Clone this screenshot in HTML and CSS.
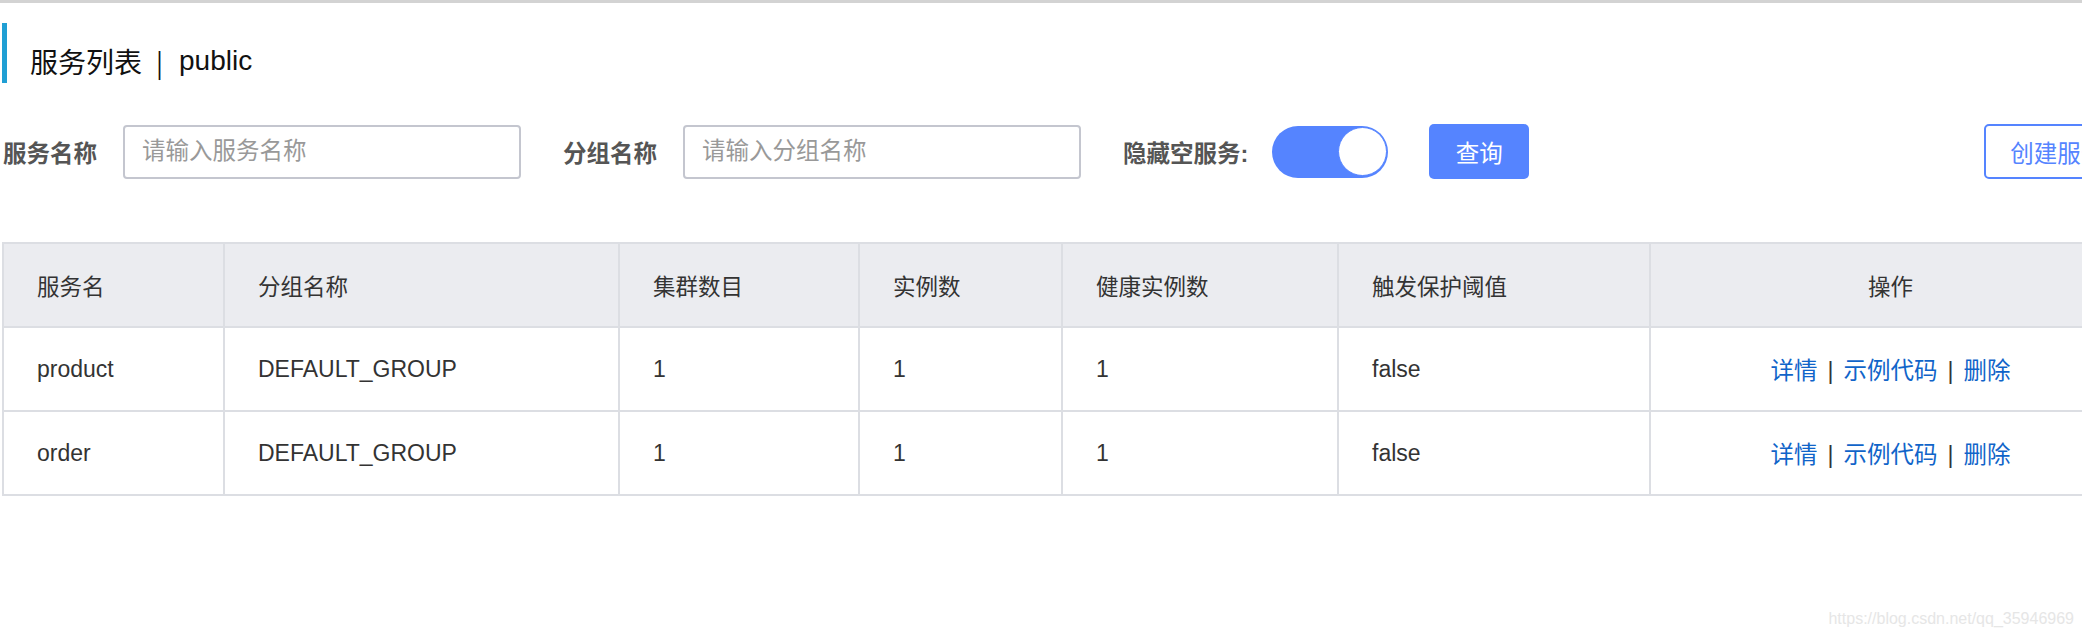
FILE: index.html
```html
<!DOCTYPE html>
<html lang="zh-CN">
<head>
<meta charset="utf-8">
<title>服务列表</title>
<link rel="stylesheet" href="styles.css">
</head>
<body>
<div class="page">
  <h3 class="page-title">
    <span class="title-item">服务列表</span>
    <span class="title-sep">|</span>
    <span class="title-item">public</span>
  </h3>

  <div class="filter-bar">
    <label class="filter-label">服务名称</label>
    <input class="text-input" type="text" placeholder="请输入服务名称">
    <label class="filter-label second">分组名称</label>
    <input class="text-input" type="text" placeholder="请输入分组名称">
    <label class="filter-label third">隐藏空服务:</label>
    <div class="switch"><span class="switch-knob"></span></div>
    <button class="btn btn-primary">查询</button>
    <button class="btn btn-outline">创建服务</button>
  </div>

  <div class="table-wrap">
    <table class="data-table">
      <colgroup>
        <col class="c1"><col class="c2"><col class="c3"><col class="c4"><col class="c5"><col class="c6"><col class="c7">
      </colgroup>
      <thead>
        <tr>
          <th>服务名</th>
          <th>分组名称</th>
          <th>集群数目</th>
          <th>实例数</th>
          <th>健康实例数</th>
          <th>触发保护阈值</th>
          <th class="center">操作</th>
        </tr>
      </thead>
      <tbody>
        <tr>
          <td>product</td>
          <td>DEFAULT_GROUP</td>
          <td>1</td>
          <td>1</td>
          <td>1</td>
          <td>false</td>
          <td class="center"><a class="link">详情</a><span class="bar">|</span><a class="link">示例代码</a><span class="bar">|</span><a class="link">删除</a></td>
        </tr>
        <tr>
          <td>order</td>
          <td>DEFAULT_GROUP</td>
          <td>1</td>
          <td>1</td>
          <td>1</td>
          <td>false</td>
          <td class="center"><a class="link">详情</a><span class="bar">|</span><a class="link">示例代码</a><span class="bar">|</span><a class="link">删除</a></td>
        </tr>
      </tbody>
    </table>
  </div>

  <div class="watermark">https://blog.csdn.net/qq_35946969</div>
</div>
</body>
</html>
```

FILE: styles.css
```css
html, body {
  margin: 0;
  padding: 0;
  background: #ffffff;
  overflow: hidden;
}

.page {
  width: 2082px;
  height: 638px;
  box-sizing: border-box;
  border-top: 3px solid #d3d3d3;
  font-family: "Liberation Sans", "Noto Sans CJK SC", sans-serif;
  color: #333333;
  overflow: hidden;
  position: relative;
}

.page-title {
  margin: 20px 0 0 2px;
  height: 60px;
  box-sizing: border-box;
  border-left: 5px solid #209fd4;
  padding: 16px 0 0 23px;
  display: flex;
  align-items: center;
  font-size: 28px;
  font-weight: normal;
  color: #111111;
}

.title-sep {
  font-family: "Noto Sans CJK SC", sans-serif;
  font-size: 26px;
  margin: 0 16px 0 14px;
}

.filter-bar {
  margin-top: 41px;
  padding-left: 3px;
  height: 55px;
  display: flex;
  align-items: center;
  width: 2300px;
}

.filter-bar > * {
  flex: none;
}

.filter-label {
  font-size: 23.5px;
  font-weight: bold;
  color: #555555;
  margin-right: 26px;
  white-space: nowrap;
}

.filter-label.second {
  margin-left: 42px;
}

.filter-label.third {
  margin-left: 42px;
  margin-right: 24px;
}

.text-input {
  width: 398px;
  height: 54px;
  box-sizing: border-box;
  border: 2px solid #c4c6cf;
  border-radius: 4px;
  padding: 0 17px;
  font-family: "Liberation Sans", "Noto Sans CJK SC", sans-serif;
  font-size: 23.5px;
  color: #333333;
  outline: none;
}

.text-input::placeholder {
  color: #999999;
}

.switch {
  width: 116px;
  height: 52px;
  border-radius: 26px;
  background: #5584ff;
  display: flex;
  align-items: center;
  justify-content: flex-end;
  box-sizing: border-box;
  padding-right: 1px;
}

.switch-knob {
  width: 49px;
  height: 49px;
  border-radius: 50%;
  background: #ffffff;
  border: 1px solid #5584ff;
  box-sizing: border-box;
}

.btn {
  height: 55px;
  border-radius: 5px;
  font-family: "Liberation Sans", "Noto Sans CJK SC", sans-serif;
  font-size: 23.5px;
  box-sizing: border-box;
  cursor: pointer;
  white-space: nowrap;
}

.btn-primary {
  margin-left: 41px;
  width: 100px;
  background: #5584ff;
  border: none;
  color: #ffffff;
}

.btn-outline {
  margin-left: 455px;
  background: #ffffff;
  border: 2px solid #5584ff;
  color: #5584ff;
  padding: 0 24px;
}

.table-wrap {
  margin-top: 63px;
  padding-left: 2px;
  width: 2200px;
}

.data-table {
  border-collapse: collapse;
  table-layout: fixed;
  width: 2128px;
  font-size: 23px;
  color: #333333;
}

.c1 { width: 221px; }
.c2 { width: 395px; }
.c3 { width: 240px; }
.c4 { width: 203px; }
.c5 { width: 276px; }
.c6 { width: 312px; }
.c7 { width: 481px; }

.data-table th,
.data-table td {
  border: 2px solid #dcdee3;
  padding: 0 0 0 33px;
  text-align: left;
  height: 84px;
  box-sizing: border-box;
  white-space: nowrap;
}

.data-table th {
  background: #ebecf0;
  font-weight: normal;
  font-size: 22.5px;
}

.data-table .center {
  text-align: center;
  padding-left: 0;
  padding-right: 0;
}

.link {
  color: #1064c9;
  text-decoration: none;
  font-size: 23.5px;
}

.bar {
  margin: 0 10px;
  color: #333333;
}

.watermark {
  position: absolute;
  right: 8px;
  top: 607px;
  font-family: "Liberation Sans", sans-serif;
  font-size: 16px;
  color: #e6e6e6;
}
```
